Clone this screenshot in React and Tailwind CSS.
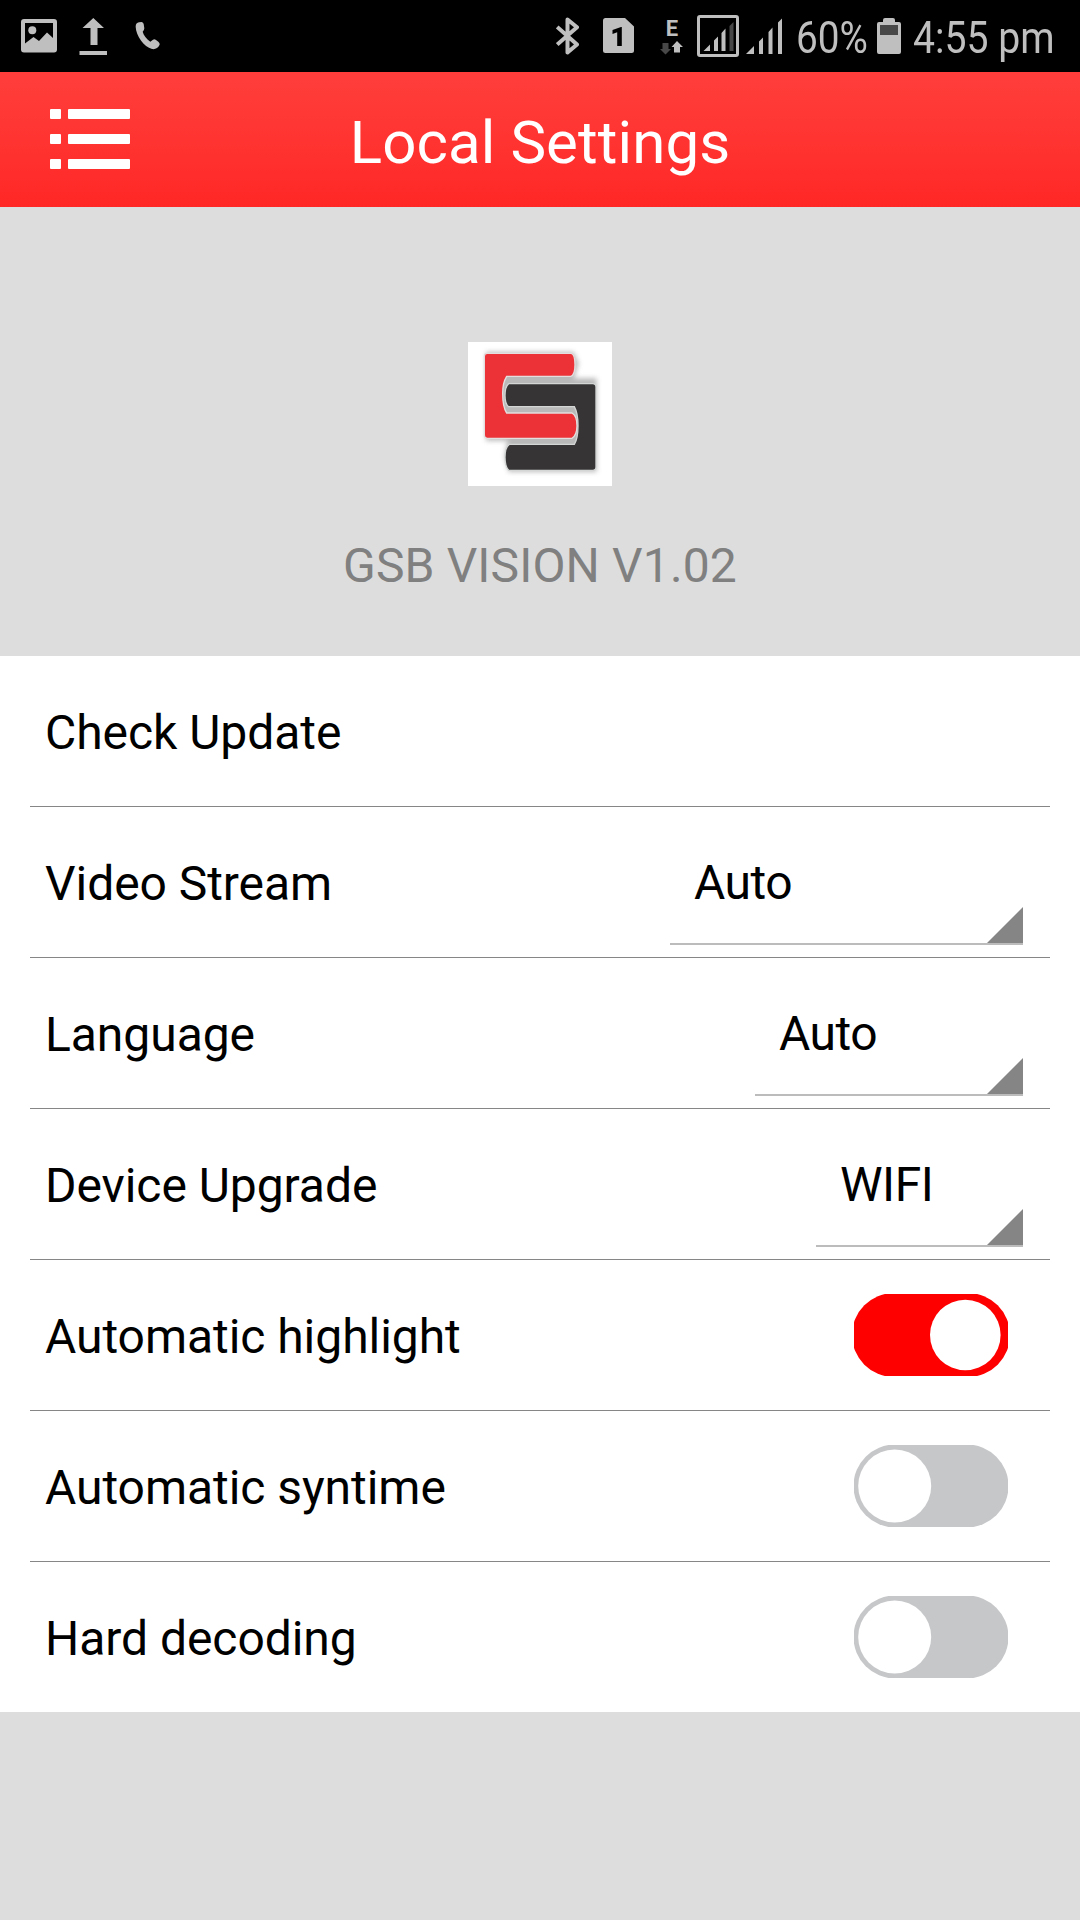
import React from 'react';

function StatusBar() {
  return (
    <div className="flex h-[72px] items-start bg-black pl-[21px] font-normal text-[#bfbfbf]">
      {/* picture */}
      <svg className="mt-[19px] h-[34px] w-[36px]" viewBox="0 0 36 34" fill="currentColor">
        <path fillRule="evenodd" d="M3 0h30q3 0 3 3v27.500q0 3-3 3H3q-3 0-3-3V3Q0 0 3 0zM4 4v20.500l8.500-6.500 5.500 4 8-8.500 6 5.500V4z" />
        <circle cx="11.300" cy="11.300" r="4" />
      </svg>
      {/* upload */}
      <svg className="ml-[22px] mt-[18px] h-[37px] w-[28px]" viewBox="0 0 28 37" fill="currentColor">
        <path d="M14.300 0L25 10h-6.500v17h-7V10H3.500zM.500 33H28v4H.500z" />
      </svg>
      {/* call */}
      <svg className="ml-[28px] mt-[22px] h-[28px] w-[25px]" viewBox="405 66 75 84" fill="currentColor">
        <path d="M407 80C407 72 411 68 417 67L425 66Q430 67 431 72L433 85Q433 90 428 95C431 106 439 116 451 125L459 119Q463 117 467 119L475 125Q481 130 478 136C475 144 465 149 456 147C432 140 408 108 407 80z" />
      </svg>
      {/* bluetooth */}
      <svg className="ml-[396px] mt-[17px] h-[38px] w-[23px]" viewBox="0 0 23 38" fill="none" stroke="currentColor" strokeWidth="4" strokeLinejoin="round">
        <path d="M1.200 10L21 27.500 11.500 35.500V2.500L21 10.200 1.200 27.500" />
      </svg>
      {/* sim 1 */}
      <svg className="ml-[24px] mt-[18px] h-[35px] w-[31px]" viewBox="0 0 31 35">
        <path d="M2.500 0H22l9 8.500V32.500q0 2.500-2.500 2.500h-26Q0 35 0 32.500v-30Q0 0 2.500 0z" fill="currentColor" />
        <path d="M18.800 9v19h-4.600V14.300l-4.700 1.600V12l8.500-3z" fill="#000" />
      </svg>
      {/* edge data */}
      <div className="ml-[26px] mt-[19px] flex w-[23px] flex-col items-center">
        <span className="h-[22px] pl-[1px] font-['Roboto',sans-serif] text-[22px] font-bold leading-[20px]">E</span>
        <svg className="h-[14px] w-[23px]" viewBox="0 0 23 14">
          <path d="M2.500 2h6v6h2.500L5.500 13.500 0 8h2.500z" fill="#484848" />
          <path d="M14 11.500V6h-2.500L17 0l6 6h-3v5.500z" fill="currentColor" />
        </svg>
      </div>
      {/* boxed signal */}
      <svg className="ml-[14px] mt-[15px] h-[42px] w-[42px]" viewBox="0 0 42 42" fill="currentColor">
        <rect x="1.500" y="1.500" width="39" height="39" rx="1.500" fill="none" stroke="currentColor" strokeWidth="3" />
        <path d="M6.500 36L13 29.500V36zM17 36V25.500L21 21.500V36zM24.500 36V18L28.500 13.500V36z" />
        <path d="M32.500 36V11L36.500 7V36z" fill="#484848" />
      </svg>
      {/* signal */}
      <svg className="ml-[7px] mt-[18px] h-[36px] w-[36px]" viewBox="0 0 36 36" fill="currentColor">
        <path d="M0 36L8 28V36zM13 36V23.500L17 19.500V36zM22.500 36V14L26.500 9.500V36zM32 36V4.500L36 .500V36z" />
      </svg>
      <div className="ml-[14px] w-[81px]">
        <span className="mt-[11px] inline-block origin-left scale-x-[0.86] whitespace-nowrap text-[45px] leading-[53px]">60%</span>
      </div>
      {/* battery */}
      <svg className="h-[54px] w-[24px] shrink-0" viewBox="0 0 24 54">
        <path d="M6 22v-2q0-2 2-2h8q2 0 2 2v2h4q2 0 2 2v28q0 2-2 2H2q-2 0-2-2V24q0-2 2-2z" fill="currentColor" />
        <path d="M3 25h18v10H3z" fill="#484848" />
      </svg>
      <span className="ml-[12px] mt-[11px] inline-block origin-left scale-x-[0.87] whitespace-nowrap text-[45px] leading-[53px]">4:55 pm</span>
    </div>
  );
}

function MenuIcon() {
  return (
    <div className="flex w-[80px] flex-col gap-[15px]">
      {[0, 1, 2].map((i) => (
        <div key={i} className="flex justify-between">
          <div className="h-[10px] w-[11px] rounded-[1px] bg-white" />
          <div className="h-[10px] w-[62px] rounded-[1px] bg-white" />
        </div>
      ))}
    </div>
  );
}

function Header() {
  return (
    <div className="grid h-[135px] grid-cols-[200px_1fr_200px] items-center bg-linear-to-b from-[#ff3e3b] to-[#ff2726]">
      <div className="pb-[1px] pl-[50px]">
        <MenuIcon />
      </div>
      <h1 className="pt-[6px] text-center text-[60px] leading-[70px] tracking-[0.1px] text-white">Local Settings</h1>
    </div>
  );
}

function Logo() {
  return (
    <svg className="h-[144px] w-[144px] bg-white" viewBox="54 36 432 432">
      <defs>
        <filter id="soft" x="-20%" y="-20%" width="140%" height="140%">
          <feGaussianBlur stdDeviation="8" />
        </filter>
      </defs>
      <g fill="#a8a8a8" filter="url(#soft)" opacity="0.8">
        <path d="M108 66H370L386 100 372 145H440V425H176L164 380 172 332H108z" />
      </g>
      <path d="M112 70H364Q375 73 375 104Q375 135 362 139H170Q158 158 158 190Q158 232 170 249H366Q381 258 381 287Q381 314 366 325H112Q103 325 103 316V79Q103 70 112 70z" fill="#ec3237" stroke="#e4dede" strokeWidth="4" />
      <path d="M176 161H428Q438 161 438 171V411Q438 421 428 421H176Q165 410 165 382Q165 352 178 343H373Q384 326 384 287Q384 250 373 230H176Q165 222 165 197Q165 170 176 161z" fill="#373435" stroke="#d4d6d6" strokeWidth="4" />
    </svg>
  );
}

function Spinner({ value, width }) {
  return (
    <div className={`relative mr-[27px] mb-[12px] flex h-[138px] items-center self-end border-b-2 border-[#bcbcbc] pl-[24px] pt-[16px] ${width}`}>
      <span className="tracking-[-0.5px]">{value}</span>
      <svg className="absolute right-0 bottom-0 h-[36px] w-[36px]" viewBox="0 0 36 36">
        <path d="M36 0V36H0z" fill="#858585" />
      </svg>
    </div>
  );
}

function Toggle({ on }) {
  return (
    <svg className="mr-[42px] h-[82px] w-[154px] overflow-hidden" viewBox="0 0 154 82">
      {on ? (
        <>
          <rect x="-2" y="-1" width="158" height="84" rx="42" fill="#ff0000" />
          <circle cx="111.300" cy="41" r="35.300" fill="#fff" />
        </>
      ) : (
        <>
          <rect x="-0.500" y="-0.500" width="155" height="83" rx="41.500" fill="#c6c7c9" />
          <circle cx="40.700" cy="41" r="36.500" fill="#fff" />
        </>
      )}
    </svg>
  );
}

const settings = [
  { label: 'Check Update' },
  { label: 'Video Stream', control: <Spinner value="Auto" width="w-[353px]" /> },
  { label: 'Language', control: <Spinner value="Auto" width="w-[268px]" /> },
  { label: 'Device Upgrade', control: <Spinner value="WIFI" width="w-[207px]" /> },
  { label: 'Automatic highlight', control: <Toggle on /> },
  { label: 'Automatic syntime', control: <Toggle /> },
  { label: 'Hard decoding', control: <Toggle /> },
];

function App() {
  return (
    <div className="flex h-[1920px] w-[1080px] flex-col overflow-hidden bg-[#dddddd] font-['Roboto',sans-serif]">
      <StatusBar />
      <Header />

      <div className="flex h-[449px] flex-col items-center pt-[135px]">
        <Logo />
        <p className="mt-[52px] text-[48px] leading-[56px] tracking-[0.15px] text-[#808080]">GSB VISION V1.02</p>
      </div>

      <div className="bg-white px-[30px] text-[48px] leading-[56px] text-black">
        {settings.map((item) => (
          <div key={item.label} className="flex h-[151px] items-center justify-between border-b border-[#868686] last:h-[150px] last:border-b-0">
            <span className="pt-[4px] pl-[15px] tracking-[-0.05px]">{item.label}</span>
            {item.control}
          </div>
        ))}
      </div>
    </div>
  );
}

export default App;
